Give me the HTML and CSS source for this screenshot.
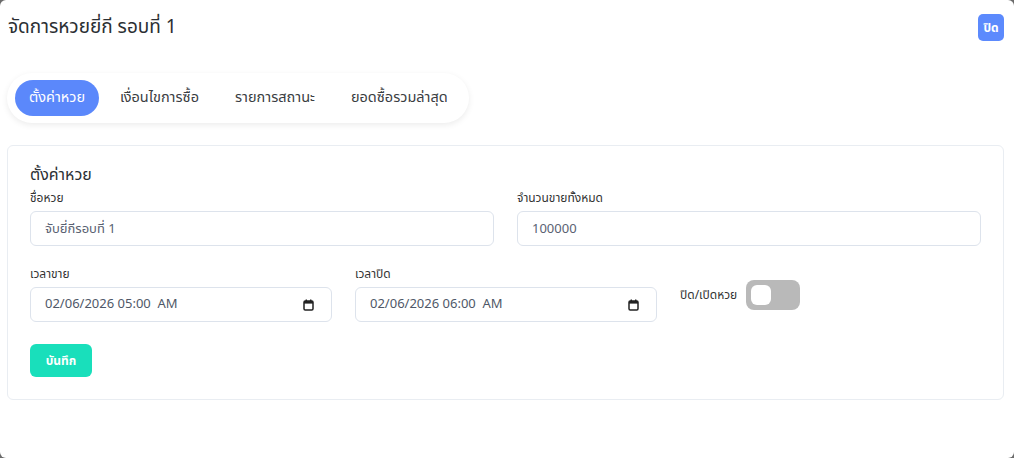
FILE: index.html
```html
<!DOCTYPE html>
<html lang="th">
<head>
<meta charset="utf-8">
<link rel="stylesheet" href="styles.css">
</head>
<body>
<div class="modal">
  <header class="modal-head">
    <h1 class="title">จัดการหวยยี่กี รอบที่ 1</h1>
    <button class="btn-close">ปิด</button>
  </header>
  <nav class="tabs">
    <span class="tab active">ตั้งค่าหวย</span>
    <span class="tab">เงื่อนไขการซื้อ</span>
    <span class="tab">รายการสถานะ</span>
    <span class="tab">ยอดซื้อรวมล่าสุด</span>
  </nav>
  <section class="card">
    <h2 class="card-title">ตั้งค่าหวย</h2>
    <div class="row two">
      <label class="field">
        <span class="lbl">ชื่อหวย</span>
        <input class="inp" type="text" value="จับยี่กีรอบที่ 1">
      </label>
      <label class="field">
        <span class="lbl">จำนวนขายทั้งหมด</span>
        <input class="inp" type="text" value="100000">
      </label>
    </div>
    <div class="row three">
      <label class="field">
        <span class="lbl">เวลาขาย</span>
        <span class="inp date">
          <span class="date-val">02/06/2026 05:00&nbsp; AM</span>
          <svg class="cal" width="11" height="12" viewBox="0 0 11 12"><rect x="1" y="2" width="9" height="9" rx="1.2" fill="none" stroke="#222" stroke-width="1.5"/><rect x="1" y="2" width="9" height="2.6" fill="#222"/><rect x="2.6" y="0.5" width="1.4" height="2" fill="#222"/><rect x="7" y="0.5" width="1.4" height="2" fill="#222"/></svg>
        </span>
      </label>
      <label class="field">
        <span class="lbl">เวลาปิด</span>
        <span class="inp date">
          <span class="date-val">02/06/2026 06:00&nbsp; AM</span>
          <svg class="cal" width="11" height="12" viewBox="0 0 11 12"><rect x="1" y="2" width="9" height="9" rx="1.2" fill="none" stroke="#222" stroke-width="1.5"/><rect x="1" y="2" width="9" height="2.6" fill="#222"/><rect x="2.6" y="0.5" width="1.4" height="2" fill="#222"/><rect x="7" y="0.5" width="1.4" height="2" fill="#222"/></svg>
        </span>
      </label>
      <div class="toggle-field">
        <span class="toggle-lbl">ปิด/เปิดหวย</span>
        <span class="switch"><span class="knob"></span></span>
      </div>
    </div>
    <button class="btn-save">บันทึก</button>
  </section>
</div>
</body>
</html>
```
FILE: styles.css
```css
* { box-sizing: border-box; }
html, body { margin: 0; height: 100%; }
body {
  background: #6b6b6b;
  font-family: "Noto Sans Thai", "Noto Sans", "Open Sans", sans-serif;
  color: #333;
}
.modal {
  background: #fff;
  height: 458px;
  border-radius: 6px;
  padding: 14px 10px 0 7px;
}
.modal-head {
  display: flex;
  justify-content: space-between;
  align-items: flex-start;
  padding-left: 1px;
}
.title {
  margin: 0;
  font-size: 19px;
  font-weight: 400;
  line-height: 28px;
  color: #2b2f33;
}
.btn-close {
  border: 0;
  background: #5c8afd;
  color: #fff;
  font-family: inherit;
  font-weight: 700;
  font-size: 12px;
  width: 26px;
  height: 27px;
  padding: 0;
  border-radius: 5px;
}
.tabs {
  display: inline-flex;
  align-items: center;
  margin-top: 31px;
  padding: 7px 3px 7px 8px;
  height: 50px;
  border-radius: 25px;
  background: #fff;
  box-shadow: 0 2px 6px rgba(0,0,0,0.08);
  white-space: nowrap;
}
.tab {
  font-size: 14.5px;
  color: #3a3d42;
  padding: 0 18px;
  line-height: 36px;
  height: 36px;
  border-radius: 18px;
  flex-shrink: 0;
}
.tab.active {
  background: #5b88fb;
  color: #fff;
  padding: 0 14px;
  margin-right: 3px;
}
.card {
  margin-top: 22px;
  border: 1px solid #e9edf2;
  border-radius: 6px;
  height: 255px;
  padding: 18px 22px 0;
  width: 997px;
}
.card-title {
  margin: 0;
  font-size: 16px;
  font-weight: 400;
  line-height: 22px;
  color: #2b2f33;
}
.row { display: grid; column-gap: 23px; }
.row.two { grid-template-columns: 1fr 1fr; margin-top: 4px; }
.row.three { grid-template-columns: 302px 302px 1fr; margin-top: 20px; }
.field { display: flex; flex-direction: column; }
.lbl {
  font-size: 12px;
  line-height: 16px;
  margin-bottom: 5px;
  color: #333;
}
.inp {
  height: 35px;
  border: 1px solid #dde3ec;
  border-radius: 6px;
  padding: 0 14px;
  font-family: "Noto Sans Thai", "Noto Sans", "Open Sans", sans-serif;
  font-size: 13px;
  color: #5a6272;
  background: #fff;
  outline: none;
  width: 100%;
}
.date {
  display: flex;
  align-items: center;
  justify-content: space-between;
  padding: 0 17px 0 14px;
}
.date-val {
  font-size: 13px;
  color: #4f5868;
  font-family: "Noto Sans", "Open Sans", sans-serif;
  margin-top: -3px;
}
.cal { display: block; }
.toggle-field {
  display: flex;
  align-items: center;
  gap: 9px;
  padding-top: 14px;
  align-self: start;
}
.toggle-lbl { font-size: 12px; color: #333; }
.switch {
  width: 54px;
  height: 30px;
  border-radius: 8px;
  background: #b9b9b9;
  padding: 5px;
  display: flex;
}
.knob {
  width: 20px;
  height: 20px;
  border-radius: 6px;
  background: #fff;
}
.btn-save {
  margin-top: 22px;
  border: 0;
  background: #19dfbb;
  color: #fff;
  font-family: inherit;
  font-weight: 700;
  font-size: 12px;
  width: 62px;
  height: 33px;
  border-radius: 6px;
}
```
